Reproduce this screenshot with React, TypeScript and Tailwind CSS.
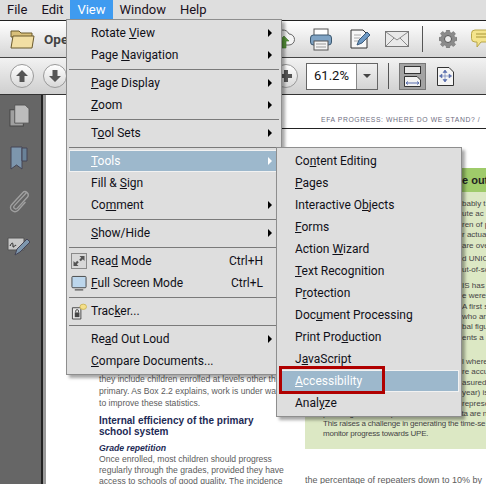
import type { ReactNode } from 'react';

const uiFont = "font-['Roboto','Noto_Sans',sans-serif]";
const docFont = "font-['Liberation_Sans',Arial,sans-serif]";

type Entry =
  | { sep: true }
  | {
      label: ReactNode;
      arrow?: boolean;
      shortcut?: string;
      icon?: ReactNode;
      active?: boolean;
    };

function ReadModeIcon() {
  return (
    <svg width="16" height="16" viewBox="0 0 16 16">
      <rect x="0.5" y="0.5" width="15" height="15" fill="#d8d8d8" stroke="#8a8a8a" />
      <path d="M8.5 3h5v5l-1.7-1.7-2 2-1.6-1.600 2-2zM7.500 13h-5V8l1.700 1.700 2-2 1.600 1.600-2 2z" fill="#555" />
    </svg>
  );
}

function FullScreenIcon() {
  return (
    <svg width="17" height="17" viewBox="0 0 17 17">
      <rect x="1" y="1" width="15" height="12" rx="1" fill="#bcd6ec" stroke="#444" />
      <path d="M4 14.500h9v1.500H4z" fill="#666" />
    </svg>
  );
}

function TrackerIcon() {
  return (
    <svg width="17" height="17" viewBox="0 0 17 17">
      <path d="M1.500 4.500h9v12h-9z" fill="#e8e8e8" stroke="#444" />
      <rect x="4" y="9.500" width="5" height="5" fill="#444" />
      <path d="M5 9.500V8a1.500 1.500 0 0 1 3 0v1.500" fill="none" stroke="#444" />
      <ellipse cx="13" cy="3.500" rx="3.500" ry="2.800" fill="#f5e08a" stroke="#cdb65a" />
    </svg>
  );
}

const viewMenu: Entry[] = [
  { label: <>Rotate <u>V</u>iew</>, arrow: true },
  { label: <>Page <u>N</u>avigation</>, arrow: true },
  { sep: true },
  { label: <><u>P</u>age Display</>, arrow: true },
  { label: <><u>Z</u>oom</>, arrow: true },
  { sep: true },
  { label: <>T<u>o</u>ol Sets</>, arrow: true },
  { sep: true },
  { label: <><u>T</u>ools</>, arrow: true, active: true },
  { label: <>Fill &amp; <u>S</u>ign</> },
  { label: <>Co<u>m</u>ment</>, arrow: true },
  { sep: true },
  { label: <><u>S</u>how/Hide</>, arrow: true },
  { sep: true },
  { label: <>Rea<u>d</u> Mode</>, shortcut: 'Ctrl+H', icon: <ReadModeIcon /> },
  { label: <><u>F</u>ull Screen Mode</>, shortcut: 'Ctrl+L', icon: <FullScreenIcon /> },
  { sep: true },
  { label: <>Trac<u>k</u>er...</>, icon: <TrackerIcon /> },
  { sep: true },
  { label: <>Re<u>a</u>d Out Loud</>, arrow: true },
  { label: <><u>C</u>ompare Documents...</> },
];

const toolsMenu: Entry[] = [
  { label: <>Co<u>n</u>tent Editing</> },
  { label: <><u>P</u>ages</> },
  { label: <>Interactive O<u>b</u>jects</> },
  { label: <><u>F</u>orms</> },
  { label: <>Action <u>W</u>izard</> },
  { label: <><u>T</u>ext Recognition</> },
  { label: <>P<u>r</u>otection</> },
  { label: <>Doc<u>u</u>ment Processing</> },
  { label: <>Print Pro<u>d</u>uction</> },
  { label: <>J<u>a</u>vaScript</> },
  { label: <><u>A</u>ccessibility</>, active: true },
  { label: <>Anal<u>y</u>ze</> },
];

function MenuRows({ items, inset }: { items: Entry[]; inset: string }) {
  return (
    <>
      {items.map((item, i) =>
        'sep' in item ? (
          <div key={i} className="mx-[2px] mb-[2px] mt-[3px] h-px bg-[#7a7a7a]" />
        ) : (
          <div
            key={i}
            className={`relative mx-[2px] flex h-[22px] items-center ${inset} pr-[6px] text-[12px] ${
              item.active
                ? 'bg-[#9db8cc] text-white shadow-[inset_0_0_0_1px_#f2f2f2]'
                : 'text-[#101018]'
            }`}
          >
            {item.icon && (
              <span className="absolute left-[2px] top-[3px] flex h-4 w-4 items-center justify-center">
                {item.icon}
              </span>
            )}
            <span className="whitespace-nowrap">{item.label}</span>
            {item.shortcut && (
              <span className="ml-auto mr-[10px] whitespace-nowrap">{item.shortcut}</span>
            )}
            {item.arrow && (
              <span
                className={`ml-auto mr-[1px] h-0 w-0 border-y-[4px] border-l-[4px] border-y-transparent ${
                  item.active ? 'border-l-white' : 'border-l-black'
                }`}
              />
            )}
          </div>
        ),
      )}
    </>
  );
}

function RoundButton({ children }: { children: ReactNode }) {
  return (
    <div className="flex h-[24px] w-[24px] items-center justify-center rounded-full border border-[#9a9a9a] bg-gradient-to-b from-white to-[#d8d8d8]">
      {children}
    </div>
  );
}

function TopToolbar() {
  return (
    <div className="flex h-[38px] items-center overflow-hidden border-y border-t-[#222] border-b-[#444] bg-gradient-to-b from-white to-[#d6d6d6] pl-[10px]">
      <svg width="25" height="20" viewBox="0 0 25 20">
        <path d="M1 2h8l2 2h11v4H1z" fill="#d9c07a" stroke="#6b5a2c" />
        <path d="M1 19 3 7h21l-2 12z" fill="#f2dfa4" stroke="#6b5a2c" />
      </svg>
      <span className={`ml-[9px] text-[13.5px] font-bold text-[#444] ${uiFont}`}>Open</span>
      <div className="ml-auto mr-[-8px] flex items-center">
        <svg width="25" height="22" viewBox="0 0 25 22">
          <path d="M6 17a5 5 0 0 1 0-10 7 7 0 0 1 13-1 5.500 5.500 0 0 1 0 11z" fill="#f4f4f4" stroke="#666" />
          <path d="M14 8l-5 5h3v7h4v-7h3z" fill="#5b9a3c" stroke="#3e7526" strokeWidth="0.6" />
        </svg>
        <svg className="ml-[15px]" width="22" height="23" viewBox="0 0 22 23">
          <rect x="4" y="1" width="14" height="7" fill="#fff" stroke="#555" />
          <rect x="0.500" y="7" width="21" height="10" rx="3" fill="#7fa3c4" stroke="#3c5870" />
          <rect x="4" y="13" width="14" height="9" fill="#f4f4f4" stroke="#555" />
          <path d="M6 16h10M6 19h10" stroke="#999" />
        </svg>
        <svg className="ml-[18px]" width="22" height="20" viewBox="0 0 22 20">
          <path d="M1 1h12l4 4v14H1z" fill="#f7f7f7" stroke="#333" />
          <path d="M4 6h7M4 9h6M4 12h4" stroke="#aaa" />
          <path d="m7 16 2-5 8-8 3 3-8 8z" fill="#6f9ac4" stroke="#38597a" />
        </svg>
        <svg className="ml-[13px]" width="24" height="16" viewBox="0 0 24 16">
          <rect x="0.500" y="0.500" width="23" height="15" fill="#e9e9e9" stroke="#777" />
          <path d="m1 1 11 8 11-8M1 15l8-8M23 15l-8-8" fill="none" stroke="#8a8a8a" />
        </svg>
        <div className="ml-[13px] h-[26px] w-px bg-[#555]" />
        <svg className="ml-[16px]" width="18" height="18" viewBox="0 0 18 18">
          <path
            d="M7.500 0h3l.4 2.400 1.500.6 2-1.400 2.100 2.100-1.400 2 .6 1.500L18 7.500v3l-2.300.4-.6 1.500 1.400 2-2.100 2.100-2-1.400-1.500.6-.4 2.300h-3l-.4-2.300-1.500-.6-2 1.400-2.100-2.100 1.400-2-.6-1.500L0 10.500v-3l2.300-.4.6-1.500-1.400-2L3.600 1.500l2 1.400 1.500-.6z"
            fill="#8b8b8b"
            stroke="#666"
            strokeWidth="0.5"
          />
          <circle cx="9" cy="9" r="3.500" fill="#ececec" stroke="#555" />
        </svg>
        <svg className="ml-[14px]" width="23" height="20" viewBox="0 0 23 20">
          <path d="M4 1h15a3.500 3.500 0 0 1 3.500 3.500v5A3.500 3.500 0 0 1 19 13h-9l-4 5v-5H4A3.500 3.500 0 0 1 .5 9.500v-5A3.500 3.500 0 0 1 4 1z" fill="#f4e48c" stroke="#b8a648" />
          <path d="M5 5h13M5 8h13" stroke="#a89638" />
        </svg>
      </div>
    </div>
  );
}

function SecondToolbar() {
  return (
    <div className="flex h-[37px] items-center border-b border-b-[#333] bg-gradient-to-b from-[#f2f2f2] to-[#cfcfcf] pl-[10px]">
      <RoundButton>
        <svg width="14" height="14" viewBox="0 0 14 14">
          <path d="M7 1 1 7h3.500v6h5V7H13z" fill="#555" />
        </svg>
      </RoundButton>
      <div className="ml-[9px]">
        <RoundButton>
          <svg width="14" height="14" viewBox="0 0 14 14">
            <path d="M7 13 1 7h3.500V1h5v6H13z" fill="#555" />
          </svg>
        </RoundButton>
      </div>
      <div className="ml-[207px]">
        <RoundButton>
          <svg width="14" height="14" viewBox="0 0 14 14">
            <path d="M5 1h4v4h4v4H9v4H5V9H1V5h4z" fill="#555" />
          </svg>
        </RoundButton>
      </div>
      <div className="ml-[8px] flex h-[27px] w-[72px] border border-[#666] bg-white">
        <div className={`flex w-[49px] items-center justify-center text-[13px] text-[#111] ${uiFont}`}>
          61.2%
        </div>
        <div className="flex flex-1 items-center justify-center border-l border-[#888] bg-gradient-to-b from-[#f0f0f0] to-[#d4d4d4]">
          <span className="h-0 w-0 border-x-[4px] border-t-[4px] border-x-transparent border-t-[#444]" />
        </div>
      </div>
      <div className="ml-[10px] h-[26px] w-px bg-[#555]" />
      <div className="ml-[10px] flex h-[27px] w-[27px] items-center justify-center border border-[#777] bg-[#a3a3a3]">
        <svg width="17" height="21" viewBox="0 0 17 21">
          <rect x="0.500" y="0.500" width="16" height="7" fill="#e8e8e8" stroke="#333" />
          <path d="M.5 10.500H13l3.500 3.500v6.500H.5z" fill="#f2f2f2" stroke="#333" />
          <path d="M2 17h13M2 17l2-1.500M2 17l2 1.500M15 17l-2-1.500M15 17l-2 1.500" stroke="#5a6fae" fill="none" />
        </svg>
      </div>
      <svg className="ml-[11px]" width="17" height="19" viewBox="0 0 17 19">
        <path d="M.5.5H12l4.500 4.500v13.500H.5z" fill="#f4f4f4" stroke="#333" />
        <path d="M8 3v12M2.500 9h12M8 3 6 5.500h4zM8 15l-2-2.500h4zM2.500 9 5 7v4zM14.500 9 12 7v4z" stroke="#5a6fae" fill="#5a6fae" strokeWidth="0.6" />
      </svg>
    </div>
  );
}

function Sidebar() {
  return (
    <div className="flex w-[46px] shrink-0 bg-[#666]">
      <div className="flex w-[41px] flex-col items-center gap-[19px] pt-[9px]">
        <svg className="ml-[-3px]" width="21" height="23" viewBox="0 0 22 24">
          <rect x="1" y="6" width="14" height="17" fill="#a0a0a0" stroke="#444" />
          <path d="M6 1h11l4 4v15H6z" fill="#bcbcbc" stroke="#555" />
        </svg>
        <svg className="ml-[-3px]" width="18" height="24" viewBox="0 0 18 24">
          <path d="M1 1h11v22l-5.500-4L1 23z" fill="#7d96ad" stroke="#445" />
          <path d="M12 2h5v13h-5z" fill="#6a8298" stroke="#445" />
        </svg>
        <svg className="ml-[-4px]" width="22" height="24" viewBox="0 0 22 26">
          <path d="M19 4 6 18c-2 2 1 5 3 3L20 9c3-4-2-8-5-5L3 17c-4 5 3 10 7 6l8-9" fill="none" stroke="#a0a0a0" strokeWidth="1.500" />
        </svg>
        <svg className="ml-[-3px] mt-[5px]" width="24" height="20" viewBox="0 0 24 20">
          <path d="M1 1h16v12H1z" fill="#c8c8c8" stroke="#555" />
          <path d="M3 9c2-4 3-4 3 0s2-3 3 0" fill="none" stroke="#222" />
          <path d="m8 18 2-6 10-10 3 3-10 10z" fill="#7d96ad" stroke="#445" />
        </svg>
      </div>
      <div className="w-[2px] bg-[#222]" />
      <div className="w-[3px] bg-[#9a9a9a]" />
    </div>
  );
}

const greenLines: [string, string][] = [
  ['', 'bably t'],
  ['', 'ute ac'],
  ['', 'ren of p'],
  ['', 'r actua'],
  ['', 'are ove'],
  ['mt-[3px]', 'd UNIC'],
  ['mt-[1px]', 'ut-of-sc'],
  ['mt-[5px]', 'IS has'],
  ['', 'e were'],
  ['', 'A first s'],
  ['', 'who are'],
  ['', 'bal figu'],
  ['', 'ents a'],
  ['mt-[14px]', 'l where'],
  ['', 're accu'],
  ['', 'asured'],
  ['', 'year) is'],
  ['', 'represe'],
];

function DocumentPage() {
  return (
    <div className={`relative flex-1 overflow-hidden bg-white text-[8.6px] text-[#5c5c5c] ${docFont}`}>
      <div className="pl-[275px] pt-[20px] text-[6.8px] leading-[10px] tracking-[0.6px] whitespace-nowrap text-[#6d6d80]">
        EFA PROGRESS: WHERE DO WE STAND? /
      </div>
      <div className="ml-[53px] mt-[3px] h-px bg-[#222]" />
      <div className="flex">
        <div className="w-[259px] pl-[53px] pt-[244px]">
          <div className="whitespace-nowrap leading-[12px]">they include children enrolled at levels other th</div>
          <div className="whitespace-nowrap leading-[12px]">primary. As Box 2.2 explains, work is under way</div>
          <div className="whitespace-nowrap leading-[12px]">to improve these statistics.</div>
          <div className="mt-[6px] text-[10px] leading-[11px] font-bold whitespace-nowrap text-[#1d2a55]">
            Internal efficiency of the primary
            <br />
            school system
          </div>
          <div className="mt-[5px] text-[8.7px] leading-[12px] font-bold whitespace-nowrap text-[#1d2a55] italic">
            Grade repetition
          </div>
          <div className="leading-[11px] whitespace-nowrap">Once enrolled, most children should progress</div>
          <div className="leading-[11px] whitespace-nowrap">regularly through the grades, provided they have</div>
          <div className="leading-[11px] whitespace-nowrap">access to schools of good quality. The incidence</div>
        </div>
        <div className="min-w-0 flex-1 pt-[39px]">
          <div className="flex h-[24px] items-center bg-[#9fcb6a] pl-[157px] text-[11px] font-bold whitespace-nowrap text-[#222]">
            e out
          </div>
          <div className="h-[257px] overflow-hidden bg-[#dce8c4] pt-[7px] text-[8px] whitespace-nowrap text-[#444]">
            {greenLines.map(([gap, text]) => (
              <div key={text} className={`h-[10.4px] pl-[157px] leading-[10px] ${gap}`}>
                {text}
              </div>
            ))}
            <div className="h-[10px] pl-[18px] leading-[10px] tracking-[-0.2px]">providing cross-comparable education data are n</div>
            <div className="h-[10px] pl-[18px] leading-[10px] tracking-[-0.2px]">This raises a challenge in generating the time-se</div>
            <div className="pl-[18px] leading-[10px] tracking-[-0.2px]">monitor progress towards UPE.</div>
          </div>
          <div className="overflow-hidden pt-[26px] text-[9px] leading-[11px] whitespace-nowrap">
            the percentage of repeaters down to 10% by
          </div>
        </div>
      </div>
    </div>
  );
}

export default function App() {
  return (
    <div className="relative flex h-[484px] w-[486px] flex-col overflow-hidden bg-white">
      <div className={`flex h-[20px] items-center bg-[#dedede] text-[13px] text-[#1a1020] ${uiFont}`}>
        <span className="px-[7px]">File</span>
        <span className="px-[7px]">Edit</span>
        <span className="flex h-full items-center bg-[#3f9bf0] px-[7px] text-white">View</span>
        <span className="px-[7px]">Window</span>
        <span className="px-[7px]">Help</span>
      </div>
      <TopToolbar />
      <SecondToolbar />
      <div className="flex min-h-0 flex-1">
        <Sidebar />
        <DocumentPage />
      </div>

      {/* View menu */}
      <div className={`absolute left-[66px] top-[19px] w-[216px] border border-[#8e8e8e] bg-[#dedede] py-[2px] shadow-[3px_3px_3px_rgba(0,0,0,0.35)] ${uiFont}`}>
        <MenuRows items={viewMenu} inset="pl-[22px]" />
      </div>

      {/* Tools submenu */}
      <div className={`absolute left-[276px] top-[147px] w-[186px] border border-[#8e8e8e] bg-[#dedede] py-[2px] shadow-[3px_3px_3px_rgba(0,0,0,0.35)] ${uiFont}`}>
        <MenuRows items={toolsMenu} inset="pl-[16px]" />
      </div>

      {/* red callout */}
      <div className="absolute left-[279px] top-[366px] h-[28px] w-[106px] border-[3px] border-[#b00000]" />
    </div>
  );
}
